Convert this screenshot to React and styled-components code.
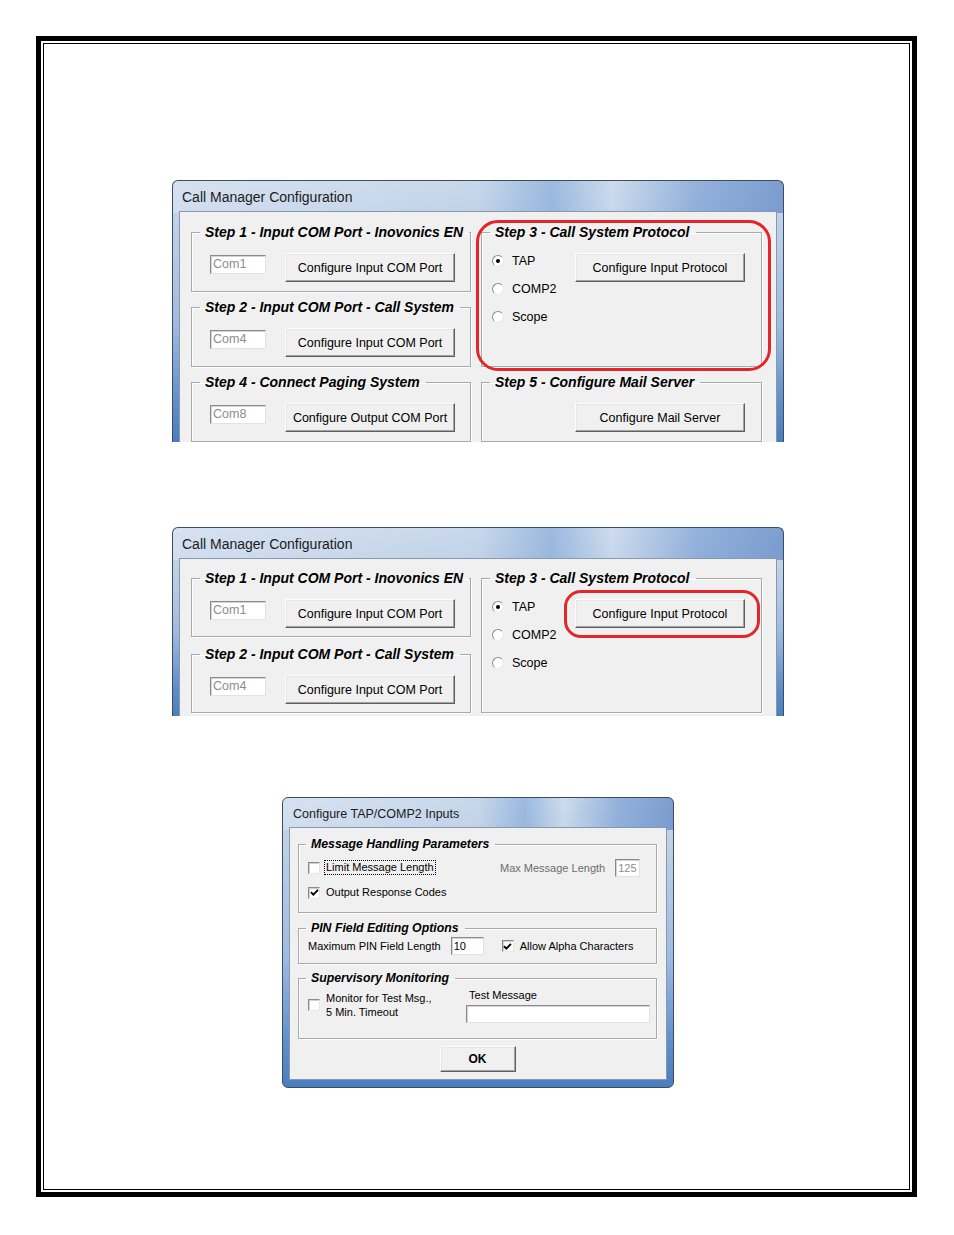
import React from 'react';
import styled, { createGlobalStyle } from 'styled-components';

const GlobalStyle = createGlobalStyle`
  html, body {
    margin: 0;
    padding: 0;
    background: #fff;
  }
  body {
    font-family: "Liberation Sans", Arial, sans-serif;
    color: #000;
  }
`;

const Frame = styled.div`
  box-sizing: border-box;
  margin: 36px 0 0 36px;
  width: 881px;
  height: 1161px;
  border: 5px solid #000;
  padding: 2px;
`;

const Inner = styled.div`
  box-sizing: border-box;
  height: 100%;
  border: 1px solid #000;
  display: flex;
  flex-direction: column;
  align-items: center;
  padding: 136px 0 0 3px;
`;

const Window = styled.section`
  position: relative;
  box-sizing: border-box;
  width: ${({ $w }) => $w}px;
  height: ${({ $h }) => $h}px;
  margin-top: ${({ $mt }) => $mt || 0}px;
  flex-shrink: 0;
  display: flex;
  flex-direction: column;
  padding: 0 6px ${({ $cut }) => ($cut ? 0 : 7)}px;
  border: 1px solid #3d4c61;
  ${({ $cut }) => $cut && 'border-bottom: none;'}
  border-radius: ${({ $cut }) => ($cut ? '6px 6px 0 0' : '6px')};
  background:
    linear-gradient(90deg, rgba(255,255,255,0.25) 0%, rgba(255,255,255,0) 50%, rgba(90,140,205,0.4) 62%, rgba(255,255,255,0.1) 72%, rgba(70,120,195,0.4) 86%, rgba(50,100,180,0.5) 100%) 0 0 / 100% 32px no-repeat,
    linear-gradient(180deg, #c8d8eb 0px, #bfd1e8 40px, #9ebbe0 55%, #5f8ec9 85%, #4a7ec0 100%);
  overflow: hidden;
`;

const TitleBar = styled.div`
  flex-shrink: 0;
  height: ${({ $h }) => $h}px;
  display: flex;
  align-items: center;
  padding: 2px 0 0 ${({ $pad }) => $pad}px;
  box-sizing: border-box;
  font-size: ${({ $size }) => $size}px;
  color: #1b1b1b;
  white-space: nowrap;
`;

const Body = styled.div`
  flex: 1;
  box-sizing: border-box;
  background: #f0f0f0;
  border: 1px solid #8797ac;
  ${({ $cut }) => $cut && 'border-bottom: none;'}
  padding: ${({ $pad }) => $pad};
  display: flex;
  flex-direction: column;
`;

const StepGrid = styled.div`
  display: grid;
  grid-template-columns: 280px 281px;
  grid-auto-rows: ${({ $row }) => $row}px;
  column-gap: 10px;
  row-gap: ${({ $gap }) => $gap}px;
`;

const Group = styled.fieldset`
  margin: 0;
  padding: 0;
  min-width: 0;
  box-sizing: border-box;
  height: ${({ $h }) => ($h ? `${$h}px` : 'auto')};
  border: 1px solid #a9a9a9;
  box-shadow: 1px 1px 0 #fff, inset 1px 1px 0 #fff;
  grid-row: span ${({ $span }) => $span || 1};
`;

const Legend = styled.legend`
  margin-left: ${({ $ml }) => $ml}px;
  padding: 0 6px 0 5px;
  font-style: italic;
  font-weight: bold;
  font-size: ${({ $size }) => $size}px;
  line-height: ${({ $lh }) => $lh}px;
  white-space: nowrap;
`;

const PortRow = styled.div`
  display: flex;
  align-items: flex-start;
  gap: 19px;
  padding: 13px 0 0 18px;
`;

const Field = styled.div`
  box-sizing: border-box;
  width: ${({ $w }) => $w}px;
  height: ${({ $h }) => $h}px;
  margin-top: ${({ $mt }) => $mt || 0}px;
  flex-shrink: 0;
  background: #fff;
  border: 1px solid;
  border-color: #8a8a8a #e2e2e2 #e2e2e2 #8a8a8a;
  box-shadow: inset 1px 1px 0 #d4d4d4;
  padding-left: 2px;
  font-size: ${({ $size }) => $size}px;
  line-height: ${({ $h }) => $h - 2}px;
  color: ${({ $dim }) => ($dim ? '#8d8d8d' : '#000')};
`;

const WinButton = styled.div`
  box-sizing: border-box;
  width: ${({ $w }) => $w}px;
  height: ${({ $h }) => $h}px;
  margin: ${({ $m }) => $m || 0};
  flex-shrink: 0;
  display: flex;
  align-items: center;
  justify-content: center;
  background: #f0f0f0;
  border: 1px solid;
  border-color: #fdfdfd #5f5f5f #5f5f5f #fdfdfd;
  box-shadow: inset -1px -1px 0 #a3a3a3, inset 1px 1px 0 #e6e6e6;
  font-size: ${({ $size }) => $size}px;
  font-weight: ${({ $bold }) => ($bold ? 'bold' : 'normal')};
  white-space: nowrap;
`;

const ProtocolRow = styled.div`
  display: flex;
  align-items: flex-start;
  padding-left: 10px;
`;

const RadioList = styled.div`
  width: 83px;
  padding-top: 7px;
  display: flex;
  flex-direction: column;
`;

const RadioItem = styled.div`
  height: 28px;
  display: flex;
  align-items: center;
  gap: 8px;
  font-size: 12.5px;
`;

const RadioDot = styled.span`
  box-sizing: border-box;
  width: 12px;
  height: 12px;
  border-radius: 50%;
  background: #fff;
  border: 1px solid;
  border-color: #8c8c8c #e8e8e8 #e8e8e8 #8c8c8c;
  display: flex;
  align-items: center;
  justify-content: center;
  &::after {
    content: '';
    width: 4px;
    height: 4px;
    border-radius: 50%;
    background: ${({ $on }) => ($on ? '#000' : 'transparent')};
  }
`;

const Mark = styled.div`
  position: absolute;
  left: ${({ $x }) => $x}px;
  top: ${({ $y }) => $y}px;
  width: ${({ $w }) => $w}px;
  height: ${({ $h }) => $h}px;
  box-sizing: border-box;
  border: 3px solid #e3262c;
  border-radius: ${({ $r }) => $r}px;
  pointer-events: none;
`;

/* small dialog parts */

const Rows = styled.div`
  padding: ${({ $pad }) => $pad};
  display: flex;
  flex-direction: column;
`;

const Line = styled.div`
  height: ${({ $h }) => $h}px;
  display: flex;
  align-items: center;
  font-size: 11px;
  white-space: nowrap;
`;

const CheckBox = styled.span`
  box-sizing: border-box;
  width: 12px;
  height: 12px;
  flex-shrink: 0;
  background: #fff;
  border: 1px solid;
  border-color: #8a8a8a #e6e6e6 #e6e6e6 #8a8a8a;
  box-shadow: inset 1px 1px 0 #cfcfcf;
  display: flex;
  align-items: center;
  justify-content: center;
`;

const CheckLabel = styled.span`
  margin-left: 4px;
  padding: 0 1px;
  border: 1px ${({ $focus }) => ($focus ? 'dotted #000' : 'solid transparent')};
  line-height: 13px;
`;

const LeftPart = styled.div`
  width: ${({ $w }) => $w}px;
  display: flex;
  align-items: center;
  flex-shrink: 0;
`;

const Dim = styled.span`
  color: #6d6d6d;
  margin-right: 10px;
`;

const Caption = styled.span`
  margin-right: ${({ $mr }) => $mr}px;
`;

const MonitorRow = styled.div`
  display: flex;
  align-items: flex-start;
  padding: 0 0 0 9px;
  font-size: 11px;
`;

const MonitorLeft = styled.div`
  width: 158px;
  margin-top: 6px;
  display: flex;
  align-items: center;
`;

const TwoLines = styled.span`
  margin-left: 6px;
  line-height: 14px;
`;

const TestCol = styled.div`
  margin-top: 3px;
  display: flex;
  flex-direction: column;
  gap: 3px;
  line-height: 14px;
`;

const Footer = styled.div`
  display: flex;
  justify-content: center;
  margin-top: 7px;
`;

const Check = () => (
  <svg width="9" height="9" viewBox="0 0 9 9">
    <path d="M1 4.2 L3.3 6.6 L8 1.8" fill="none" stroke="#000" strokeWidth="1.9" />
  </svg>
);

const Radio = ({ label, on }) => (
  <RadioItem>
    <RadioDot $on={on} />
    {label}
  </RadioItem>
);

const PortGroup = ({ title, port, action }) => (
  <Group>
    <Legend $ml={8} $size={14} $lh={16}>{title}</Legend>
    <PortRow>
      <Field $w={56} $h={19} $mt={2} $size={12.5} $dim>{port}</Field>
      <WinButton $w={170} $h={29} $size={12.5}>{action}</WinButton>
    </PortRow>
  </Group>
);

const ProtocolGroup = () => (
  <Group $span={2}>
    <Legend $ml={8} $size={14} $lh={16}>Step 3 - Call System Protocol</Legend>
    <ProtocolRow>
      <RadioList>
        <Radio label="TAP" on />
        <Radio label="COMP2" />
        <Radio label="Scope" />
      </RadioList>
      <WinButton $w={170} $h={29} $size={12.5} $m="13px 0 0 0">Configure Input Protocol</WinButton>
    </ProtocolRow>
  </Group>
);

const ManagerWindow = ({ height, top, rowH, gap, children, mark }) => (
  <Window $w={612} $h={height} $mt={top} $cut>
    <TitleBar $h={30} $pad={3} $size={14}>Call Manager Configuration</TitleBar>
    <Body $cut $pad={`${rowH === 68 ? 12 : 11}px 14px 0 11px`}>
      <StepGrid $row={rowH} $gap={gap}>{children}</StepGrid>
    </Body>
    {mark}
  </Window>
);

export default function App() {
  return (
    <>
      <GlobalStyle />
      <Frame>
        <Inner>
          <ManagerWindow
            height={262}
            top={0}
            rowH={68}
            gap={7}
            mark={<Mark $x={303} $y={39} $w={295} $h={151} $r={22} />}
          >
            <PortGroup title="Step 1 - Input COM Port - Inovonics EN" port="Com1" action="Configure Input COM Port" />
            <ProtocolGroup />
            <PortGroup title="Step 2 - Input COM Port - Call System" port="Com4" action="Configure Input COM Port" />
            <PortGroup title="Step 4 - Connect Paging System" port="Com8" action="Configure Output COM Port" />
            <Group>
              <Legend $ml={8} $size={14} $lh={16}>Step 5 - Configure Mail Server</Legend>
              <WinButton $w={170} $h={29} $size={12.5} $m="13px 0 0 93px">Configure Mail Server</WinButton>
            </Group>
          </ManagerWindow>

          <ManagerWindow
            height={189}
            top={85}
            rowH={67}
            gap={9}
            mark={<Mark $x={391} $y={62} $w={196} $h={48} $r={17} />}
          >
            <PortGroup title="Step 1 - Input COM Port - Inovonics EN" port="Com1" action="Configure Input COM Port" />
            <ProtocolGroup />
            <PortGroup title="Step 2 - Input COM Port - Call System" port="Com4" action="Configure Input COM Port" />
          </ManagerWindow>

          <Window $w={392} $h={291} $mt={81}>
            <TitleBar $h={29} $pad={4} $size={12.5}>Configure TAP/COMP2 Inputs</TitleBar>
            <Body $pad="9px 9px 0 8px">
              <Group $h={76}>
                <Legend $ml={7} $size={12.3} $lh={14}>Message Handling Parameters</Legend>
                <Rows $pad="4px 0 0 9px">
                  <Line $h={25}>
                    <LeftPart $w={192}>
                      <CheckBox />
                      <CheckLabel $focus>Limit Message Length</CheckLabel>
                    </LeftPart>
                    <Dim>Max Message Length</Dim>
                    <Field $w={25} $h={18} $size={11} $dim>125</Field>
                  </Line>
                  <Line $h={25}>
                    <CheckBox><Check /></CheckBox>
                    <CheckLabel>Output Response Codes</CheckLabel>
                  </Line>
                </Rows>
              </Group>

              <Group $h={43} style={{ marginTop: 8 }}>
                <Legend $ml={7} $size={12.3} $lh={14}>PIN Field Editing Options</Legend>
                <Rows $pad="1px 0 0 9px">
                  <Line $h={20}>
                    <Caption $mr={10}>Maximum PIN Field Length</Caption>
                    <Field $w={33} $h={18} $size={11}>10</Field>
                    <CheckBox style={{ marginLeft: 18 }}><Check /></CheckBox>
                    <CheckLabel>Allow Alpha Characters</CheckLabel>
                  </Line>
                </Rows>
              </Group>

              <Group $h={68} style={{ marginTop: 7 }}>
                <Legend $ml={7} $size={12.3} $lh={14}>Supervisory Monitoring</Legend>
                <MonitorRow>
                  <MonitorLeft>
                    <CheckBox />
                    <TwoLines>Monitor for Test Msg.,<br />5 Min. Timeout</TwoLines>
                  </MonitorLeft>
                  <TestCol>
                    <span>&nbsp;Test Message</span>
                    <Field $w={184} $h={18} $size={11} />
                  </TestCol>
                </MonitorRow>
              </Group>

              <Footer>
                <WinButton $w={76} $h={26} $size={12} $bold>OK</WinButton>
              </Footer>
            </Body>
          </Window>
        </Inner>
      </Frame>
    </>
  );
}
